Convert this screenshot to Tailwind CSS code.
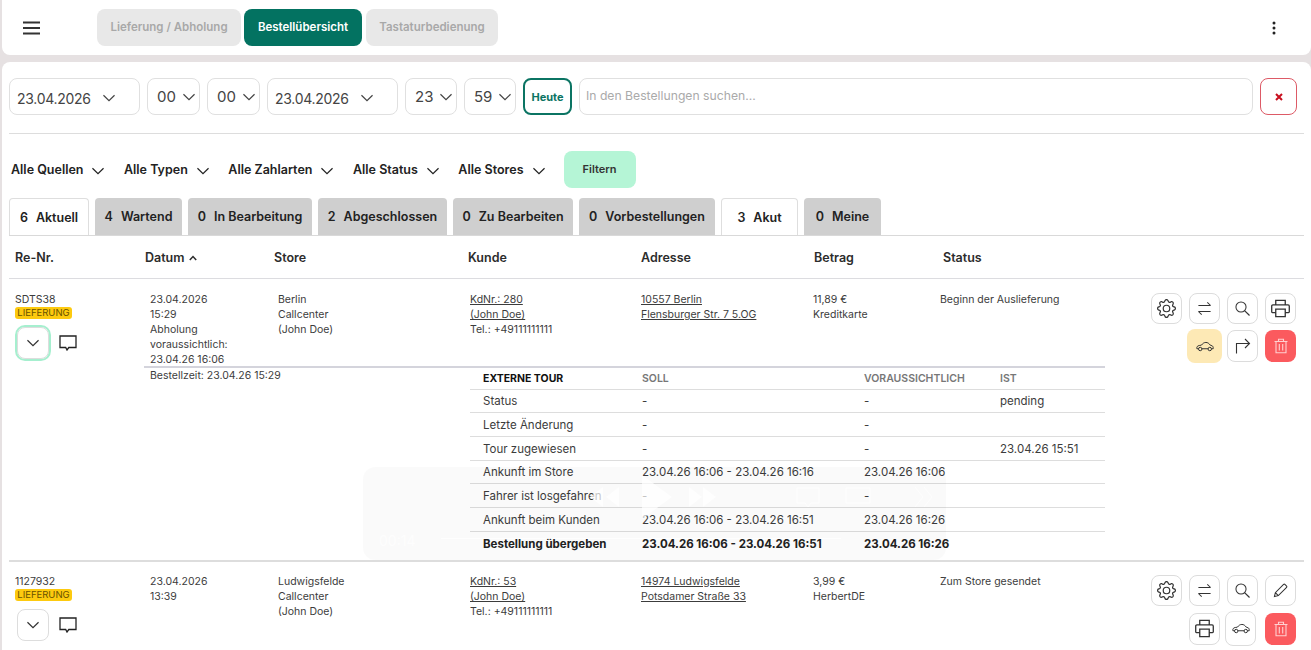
<!DOCTYPE html>
<html lang="de">
<head>
  <meta charset="UTF-8">
  <meta name="viewport" content="width=device-width, initial-scale=1.0">
  <title>Bestellübersicht</title>
  <script src="https://cdn.jsdelivr.net/npm/@tailwindcss/browser@4"></script>
</head>
<body class="relative h-[650px] overflow-hidden bg-[#e6e1e2] pl-[2px] font-[family-name:Inter,sans-serif] text-[#3c3c3c]">
  <!-- Icons -->
  <svg class="hidden">
    <symbol id="chev" viewBox="1.5 1.500 13 13"><path d="M2 5l6 6 6-6" fill="none" stroke="currentColor" stroke-width="1.300"/></symbol>
    <symbol id="gear" viewBox="0 0 16 16"><path fill="currentColor" d="M8 4.754a3.246 3.246 0 1 0 0 6.492 3.246 3.246 0 0 0 0-6.492zM5.754 8a2.246 2.246 0 1 1 4.492 0 2.246 2.246 0 0 1-4.492 0z"/><path fill="currentColor" d="M9.796 1.343c-.527-1.79-3.065-1.79-3.592 0l-.094.319a.873.873 0 0 1-1.255.52l-.292-.16c-1.64-.892-3.433.902-2.54 2.541l.159.292a.873.873 0 0 1-.52 1.255l-.319.094c-1.79.527-1.79 3.065 0 3.592l.319.094a.873.873 0 0 1 .52 1.255l-.16.292c-.892 1.64.901 3.434 2.541 2.54l.292-.159a.873.873 0 0 1 1.255.52l.094.319c.527 1.79 3.065 1.79 3.592 0l.094-.319a.873.873 0 0 1 1.255-.52l.292.16c1.64.893 3.434-.902 2.54-2.541l-.159-.292a.873.873 0 0 1 .52-1.255l.319-.094c1.79-.527 1.79-3.065 0-3.592l-.319-.094a.873.873 0 0 1-.52-1.255l.16-.292c.893-1.64-.902-3.433-2.541-2.54l-.292.159a.873.873 0 0 1-1.255-.52l-.094-.319zm-2.633.283c.246-.835 1.428-.835 1.674 0l.094.319a1.873 1.873 0 0 0 2.693 1.115l.291-.16c.764-.415 1.6.42 1.184 1.185l-.159.292a1.873 1.873 0 0 0 1.116 2.692l.318.094c.835.246.835 1.428 0 1.674l-.319.094a1.873 1.873 0 0 0-1.115 2.693l.16.291c.415.764-.42 1.6-1.185 1.184l-.291-.159a1.873 1.873 0 0 0-2.693 1.116l-.094.318c-.246.835-1.428.835-1.674 0l-.094-.319a1.873 1.873 0 0 0-2.692-1.115l-.292.16c-.764.415-1.6-.42-1.184-1.185l.159-.291A1.873 1.873 0 0 0 1.945 8.93l-.319-.094c-.835-.246-.835-1.428 0-1.674l.319-.094A1.873 1.873 0 0 0 3.06 4.377l-.16-.292c-.415-.764.42-1.6 1.185-1.184l.292.159a1.873 1.873 0 0 0 2.692-1.115l.094-.319z"/></symbol>
    <symbol id="swap" viewBox="0 0 16 16"><path d="M1.500 4.800h13M11 1.400l3.500 3.400M14.500 11.200h-13M5 14.600l-3.500-3.400" fill="none" stroke="currentColor" stroke-width="1.100"/></symbol>
    <symbol id="search" viewBox="0 0 16 16"><circle cx="6.400" cy="6.400" r="5.400" fill="none" stroke="currentColor" stroke-width="1.100"/><path d="M10.200 10.200l5.300 5.300" fill="none" stroke="currentColor" stroke-width="1.300"/></symbol>
    <symbol id="print" viewBox="0 0 16 16"><path d="M4 5V1.200h8V5M4 11.500H1.200A.7.7 0 0 1 .6 10.800V6a1 1 0 0 1 1-1h12.800a1 1 0 0 1 1 1v4.800a.7.7 0 0 1-.7.7H12M4 8.600h8v6.200H4z" fill="none" stroke="currentColor" stroke-width="1.100"/></symbol>
    <symbol id="car" viewBox="0 0 20 12"><path d="M1 8.500c-.5-2 .6-3.300 2.600-3.600l2.400-.4C7.500 2.500 9 1.500 11 1.500c2 0 3.500 1 4.800 3l2 .7c1 .4 1.500 1.300 1.300 3.300h-1.800M13.500 8.500h-7M2.800 8.500H1" fill="none" stroke="currentColor" stroke-width="1.100"/><circle cx="4.700" cy="8.800" r="1.900" fill="none" stroke="currentColor" stroke-width="1.100"/><circle cx="15.300" cy="8.800" r="1.900" fill="none" stroke="currentColor" stroke-width="1.100"/></symbol>
    <symbol id="turn" viewBox="0 0 16 16"><path d="M1.500 15.500V5.500h13M10 1l4.500 4.500L10 10" fill="none" stroke="currentColor" stroke-width="1.100"/></symbol>
    <symbol id="trash" viewBox="0 0 16 16"><path d="M1.500 3.500h13M5.500 3.500V1.200h5v2.300M3 3.500v11.300h10V3.500M6.300 6v6.500M9.700 6v6.500" fill="none" stroke="currentColor" stroke-width="1.100"/></symbol>
    <symbol id="pen" viewBox="0 0 16 16"><path d="M1.500 14.500l1-4.200L11.300 1.500a1 1 0 0 1 1.400 0l1.800 1.800a1 1 0 0 1 0 1.400L5.700 13.500zM2.500 10.300l3.200 3.200" fill="none" stroke="currentColor" stroke-width="1.100"/></symbol>
    <symbol id="chat" viewBox="0 0 18 16"><path d="M1 1h16v11.500H9.800L8 15l-1.300-2.500H1z" fill="none" stroke="currentColor" stroke-width="1.300"/></symbol>
  </svg>

  <!-- Kopfzeile -->
  <header class="flex h-[55px] items-center rounded-b-lg bg-white pl-[21px] pr-[35px]">
    <svg class="h-[14px] w-[17px] text-[#333]" viewBox="0 0 17 14"><path d="M0 1.500h17M0 7h17M0 12.500h17" stroke="currentColor" stroke-width="2"/></svg>
    <nav class="ml-[57px] flex gap-[3px] text-[11.500px] font-semibold">
      <a class="flex h-[37px] w-[144px] items-center justify-center rounded-lg bg-[#e8e8e8] pt-px text-[#a8a8a8]">Lieferung / Abholung</a>
      <a class="flex h-[37px] w-[118px] items-center justify-center rounded-lg bg-[#037261] pt-px text-white">Bestellübersicht</a>
      <a class="ml-px flex h-[37px] w-[132px] items-center justify-center rounded-lg bg-[#e8e8e8] pt-px text-[#a8a8a8]">Tastaturbedienung</a>
    </nav>
    <svg class="ml-auto h-[14px] w-[4px] text-[#222]" viewBox="0 0 4 14"><circle cx="2" cy="2" r="1.500" fill="currentColor"/><circle cx="2" cy="7" r="1.500" fill="currentColor"/><circle cx="2" cy="12" r="1.500" fill="currentColor"/></svg>
  </header>

  <main class="mt-[7px] h-[600px] rounded-t-lg bg-white pl-[7px] pr-[7px] pt-[16px]">
    <!-- Datum + Suche -->
    <div class="flex h-[37px] gap-[7px] text-[15px] text-[#444]">
      <button class="flex w-[131px] items-center rounded-lg border-[1.500px] border-[#e0e0e0] pl-[7px] pt-[3px] text-[14px] tracking-[-0.3px]">23.04.2026<svg class="ml-[12px] h-[12px] w-[12px]"><use href="#chev"/></svg></button>
      <button class="flex w-[53px] items-center rounded-lg border-[1.500px] border-[#e0e0e0] pl-[9px] pt-px">00<svg class="ml-[7px] h-[12px] w-[12px]"><use href="#chev"/></svg></button>
      <button class="flex w-[53px] items-center rounded-lg border-[1.500px] border-[#e0e0e0] pl-[9px] pt-px">00<svg class="ml-[7px] h-[12px] w-[12px]"><use href="#chev"/></svg></button>
      <button class="flex w-[131px] items-center rounded-lg border-[1.500px] border-[#e0e0e0] pl-[7px] pt-[3px] text-[14px] tracking-[-0.3px]">23.04.2026<svg class="ml-[12px] h-[12px] w-[12px]"><use href="#chev"/></svg></button>
      <button class="flex w-[52px] items-center rounded-lg border-[1.500px] border-[#e0e0e0] pl-[9px] pt-px">23<svg class="ml-[7px] h-[12px] w-[12px]"><use href="#chev"/></svg></button>
      <button class="flex w-[52px] items-center rounded-lg border-[1.500px] border-[#e0e0e0] pl-[9px] pt-px">59<svg class="ml-[7px] h-[12px] w-[12px]"><use href="#chev"/></svg></button>
      <button class="w-[49px] rounded-lg border-2 border-[#0b7463] pt-px text-[11px] font-bold text-[#0b7463]">Heute</button>
      <input class="w-[674px] rounded-lg border-[1.500px] border-[#e0e0e0] px-[6px] text-[12.200px] placeholder:text-[#aaaaaa]" placeholder="In den Bestellungen suchen...">
      <button class="flex w-[37px] items-center justify-center rounded-lg border-[1.500px] border-[#dd5a66] text-[#c80f1f]">
        <svg class="h-[8px] w-[8px]" viewBox="0 0 8 8"><path d="M1 1l6 6M7 1L1 7" stroke="currentColor" stroke-width="2"/></svg>
      </button>
    </div>
    <div class="mt-[18px] h-[1px] bg-[#dddddd]"></div>

    <!-- Filter -->
    <div class="mt-[17px] flex h-[37px] items-center pl-[2px] text-[12.500px] font-semibold text-[#222]">
      <span class="pt-[2px]">Alle Quellen</span><svg class="ml-[9px] mt-[3px] h-[12px] w-[12px]"><use href="#chev"/></svg>
      <span class="ml-[19.500px] pt-[2px]">Alle Typen</span><svg class="ml-[9px] mt-[3px] h-[12px] w-[12px]"><use href="#chev"/></svg>
      <span class="ml-[19.500px] pt-[2px]">Alle Zahlarten</span><svg class="ml-[9px] mt-[3px] h-[12px] w-[12px]"><use href="#chev"/></svg>
      <span class="ml-[19.500px] pt-[2px]">Alle Status</span><svg class="ml-[9px] mt-[3px] h-[12px] w-[12px]"><use href="#chev"/></svg>
      <span class="ml-[19.500px] pt-[2px]">Alle Stores</span><svg class="ml-[9px] mt-[3px] h-[12px] w-[12px]"><use href="#chev"/></svg>
      <button class="ml-[19px] h-[37px] w-[72px] rounded-lg bg-[#b5f5d6] text-[11px] font-semibold text-[#333]">Filtern</button>
    </div>

    <!-- Tabs -->
    <div class="mt-[10px] flex h-[38px] gap-[6px] border-b border-[#d9d9d9] text-[12.500px] font-semibold text-[#222]">
      <a class="flex w-[80px] items-center justify-center gap-[8px] rounded-t border border-b-0 border-[#dedede] bg-white pt-[2px]"><span>6</span><span>Aktuell</span></a>
      <a class="flex w-[87px] items-center justify-center gap-[8px] rounded-t bg-[#cfcfcf] pt-[2px]"><span>4</span><span>Wartend</span></a>
      <a class="flex w-[124px] items-center justify-center gap-[8px] rounded-t bg-[#cfcfcf] pt-[2px]"><span>0</span><span>In Bearbeitung</span></a>
      <a class="flex w-[129px] items-center justify-center gap-[8px] rounded-t bg-[#cfcfcf] pt-[2px]"><span>2</span><span>Abgeschlossen</span></a>
      <a class="flex w-[120px] items-center justify-center gap-[8px] rounded-t bg-[#cfcfcf] pt-[2px]"><span>0</span><span>Zu Bearbeiten</span></a>
      <a class="flex w-[136px] items-center justify-center gap-[8px] rounded-t bg-[#cfcfcf] pt-[2px]"><span>0</span><span>Vorbestellungen</span></a>
      <a class="flex w-[77px] items-center justify-center gap-[8px] rounded-t border border-b-0 border-[#dedede] bg-white pt-[2px]"><span>3</span><span>Akut</span></a>
      <a class="flex w-[77px] items-center justify-center gap-[8px] rounded-t bg-[#cfcfcf] pt-[2px]"><span>0</span><span>Meine</span></a>
    </div>

    <!-- Tabellenkopf -->
    <div class="grid h-[43px] grid-cols-[130px_129px_194px_173px_173px_129px_1fr] items-center border-b border-[#dcdce0] pl-[6px] pt-[2px] text-[12.500px] font-semibold text-[#2c2c2c]">
      <span>Re-Nr.</span>
      <span class="flex items-center gap-[4px]">Datum <svg class="h-[8px] w-[8px]" viewBox="0 0 8 8"><path d="M.8 6L4 2.500 7.200 6" fill="none" stroke="currentColor" stroke-width="1.500"/></svg></span>
      <span>Store</span><span>Kunde</span><span>Adresse</span><span>Betrag</span><span>Status</span>
    </div>

    <!-- Bestellung 1 -->
    <div class="grid h-[87px] grid-cols-[135px_128px_192px_171px_172px_127px_1fr] pl-[6px] pt-[13px] text-[10.500px] leading-[15px]">
      <div>
        <div>SDTS38</div>
        <div class="h-[12px] w-[57px] rounded-[3px] bg-[#fdca0f] text-center text-[9.500px] leading-[12px] text-[#6a5200]">LIEFERUNG</div>
        <div class="mt-[8px] flex items-center">
          <button class="ml-[2px] flex h-[32px] w-[32px] items-center justify-center rounded-lg border border-[#dddddd] bg-white text-[#333] outline-2 outline-[#a6efcf]"><svg class="h-[12px] w-[12px]"><use href="#chev"/></svg></button>
          <svg class="ml-[10px] h-[16px] w-[18px] text-[#222]"><use href="#chat"/></svg>
        </div>
      </div>
      <div>23.04.2026<br>15:29<br>Abholung<br>voraussichtlich:<br>23.04.26 16:06</div>
      <div>Berlin<br>Callcenter<br>(John Doe)</div>
      <div><a class="underline">KdNr.: 280</a><br><a class="underline">(John Doe)</a><br>Tel.: +49111111111</div>
      <div class="underline">10557 Berlin<br>Flensburger Str. 7 5.OG</div>
      <div>11,89 €<br>Kreditkarte</div>
      <div>Beginn der Auslieferung</div>
    </div>

    <!-- Tourdetails -->
    <div class="ml-[135px] w-[961px] border-t-2 border-[#d4d4dc]">
      <div class="flex">
        <div class="w-[326px] pl-[6px] text-[10.500px] leading-[15px]">Bestellzeit: 23.04.26 15:29</div>
        <table class="w-[635px] table-fixed border-collapse text-[11.500px] [&_td]:pt-[2px]">
          <colgroup><col class="w-[172px]"><col class="w-[222px]"><col class="w-[136px]"><col class="w-[105px]"></colgroup>
          <tbody>
            <tr class="h-[21px] border-b border-[#dddddd] text-[10.500px] font-semibold text-[#777777]"><td class="pl-[13px] font-bold text-[#111]">EXTERNE TOUR</td><td>SOLL</td><td>VORAUSSICHTLICH</td><td>IST</td></tr>
            <tr class="h-[23.700px] border-b border-[#dddddd]"><td class="pl-[13px]">Status</td><td>-</td><td>-</td><td>pending</td></tr>
            <tr class="h-[23.700px] border-b border-[#dddddd]"><td class="pl-[13px]">Letzte Änderung</td><td>-</td><td>-</td><td></td></tr>
            <tr class="h-[23.700px] border-b border-[#dddddd]"><td class="pl-[13px]">Tour zugewiesen</td><td>-</td><td>-</td><td>23.04.26 15:51</td></tr>
            <tr class="h-[23.700px] border-b border-[#dddddd]"><td class="pl-[13px]">Ankunft im Store</td><td>23.04.26 16:06 - 23.04.26 16:16</td><td>23.04.26 16:06</td><td></td></tr>
            <tr class="h-[23.700px] border-b border-[#dddddd]"><td class="pl-[13px]">Fahrer ist losgefahren</td><td>-</td><td>-</td><td></td></tr>
            <tr class="h-[23.700px] border-b border-[#dddddd]"><td class="pl-[13px]">Ankunft beim Kunden</td><td>23.04.26 16:06 - 23.04.26 16:51</td><td>23.04.26 16:26</td><td></td></tr>
            <tr class="h-[24px] font-bold text-[#222]"><td class="pl-[13px]">Bestellung übergeben</td><td>23.04.26 16:06 - 23.04.26 16:51</td><td>23.04.26 16:26</td><td></td></tr>
          </tbody>
        </table>
      </div>
    </div>
    <div class="mt-[5px] h-[2px] bg-[#dddddd]"></div>

    <!-- Bestellung 2 -->
    <div class="grid grid-cols-[135px_128px_192px_171px_172px_127px_1fr] pl-[6px] pt-[12px] text-[10.500px] leading-[15px]">
      <div>
        <div>1127932</div>
        <div class="h-[12px] w-[57px] rounded-[3px] bg-[#fdca0f] text-center text-[9.500px] leading-[12px] text-[#6a5200]">LIEFERUNG</div>
        <div class="mt-[8px] flex items-center">
          <button class="ml-[2px] flex h-[32px] w-[32px] items-center justify-center rounded-lg border border-[#dddddd] bg-white text-[#333]"><svg class="h-[12px] w-[12px]"><use href="#chev"/></svg></button>
          <svg class="ml-[10px] h-[16px] w-[18px] text-[#222]"><use href="#chat"/></svg>
        </div>
      </div>
      <div>23.04.2026<br>13:39</div>
      <div>Ludwigsfelde<br>Callcenter<br>(John Doe)</div>
      <div><a class="underline">KdNr.: 53</a><br><a class="underline">(John Doe)</a><br>Tel.: +49111111111</div>
      <div class="underline">14974 Ludwigsfelde<br>Potsdamer Straße 33</div>
      <div>3,99 €<br>HerbertDE</div>
      <div>Zum Store gesendet</div>
    </div>
  </main>

  <!-- Aktionen Bestellung 1 -->
  <div class="absolute left-[1151px] top-[293px] flex w-[145px] flex-col items-end gap-[5px] text-[#333]">
    <div class="flex gap-[7px]">
      <button class="flex h-[31px] w-[31px] items-center justify-center rounded-lg border-[1.500px] border-[#dcdcdc] bg-white"><svg class="h-[19px] w-[19px]"><use href="#gear"/></svg></button>
      <button class="flex h-[31px] w-[31px] items-center justify-center rounded-lg border-[1.500px] border-[#dcdcdc] bg-white"><svg class="h-[15px] w-[15px]"><use href="#swap"/></svg></button>
      <button class="flex h-[31px] w-[31px] items-center justify-center rounded-lg border-[1.500px] border-[#dcdcdc] bg-white"><svg class="h-[15px] w-[15px]"><use href="#search"/></svg></button>
      <button class="flex h-[31px] w-[31px] items-center justify-center rounded-lg border-[1.500px] border-[#dcdcdc] bg-white"><svg class="h-[19px] w-[19px]"><use href="#print"/></svg></button>
    </div>
    <div class="flex items-center gap-[7px]">
      <button class="-mr-[2px] flex h-[34px] w-[35px] items-center justify-center rounded-lg bg-[#fde9b5]"><svg class="h-[11px] w-[18px]"><use href="#car"/></svg></button>
      <button class="flex h-[32px] w-[31px] items-center justify-center rounded-lg border-[1.500px] border-[#dcdcdc] bg-white"><svg class="h-[16px] w-[16px]"><use href="#turn"/></svg></button>
      <button class="flex h-[32px] w-[31px] items-center justify-center rounded-lg bg-[#fb5a5e] text-[#ffd0d0]"><svg class="h-[18px] w-[16px]"><use href="#trash"/></svg></button>
    </div>
  </div>

  <!-- Aktionen Bestellung 2 -->
  <div class="absolute left-[1151px] top-[575px] flex w-[145px] flex-col items-end gap-[5px] text-[#333]">
    <div class="flex gap-[7px]">
      <button class="flex h-[31px] w-[31px] items-center justify-center rounded-lg border-[1.500px] border-[#dcdcdc] bg-white"><svg class="h-[19px] w-[19px]"><use href="#gear"/></svg></button>
      <button class="flex h-[31px] w-[31px] items-center justify-center rounded-lg border-[1.500px] border-[#dcdcdc] bg-white"><svg class="h-[15px] w-[15px]"><use href="#swap"/></svg></button>
      <button class="flex h-[31px] w-[31px] items-center justify-center rounded-lg border-[1.500px] border-[#dcdcdc] bg-white"><svg class="h-[15px] w-[15px]"><use href="#search"/></svg></button>
      <button class="flex h-[31px] w-[31px] items-center justify-center rounded-lg border-[1.500px] border-[#dcdcdc] bg-white"><svg class="h-[15px] w-[15px]"><use href="#pen"/></svg></button>
    </div>
    <div class="flex items-center gap-[7px]">
      <button class="flex h-[32px] w-[31px] items-center justify-center rounded-lg border-[1.500px] border-[#dcdcdc] bg-white"><svg class="h-[19px] w-[19px]"><use href="#print"/></svg></button>
      <button class="-ml-[2px] flex h-[35px] w-[31px] items-center justify-center rounded-lg border-[1.500px] border-[#dcdcdc] bg-white"><svg class="h-[11px] w-[18px]"><use href="#car"/></svg></button>
      <button class="ml-[2px] flex h-[32px] w-[31px] items-center justify-center rounded-lg bg-[#fb5a5e] text-[#ffd0d0]"><svg class="h-[18px] w-[16px]"><use href="#trash"/></svg></button>
    </div>
  </div>

  <!-- Schwaches Player-Overlay -->
  <div class="pointer-events-none absolute left-[363px] top-[467px] h-[93px] w-[583px] rounded-xl bg-black/[0.02] text-white/70">
    <svg class="absolute inset-0 h-[93px] w-[583px]" viewBox="0 0 583 93">
      <path d="M240 20v20l-13-10zM256 20v20l-13-10zM279 8v44l30-22zM326 20v20l13-10zM340 20v20l13-10z" fill="currentColor"/>
      <path d="M434 21h22v15h-8l-3 4-3-4h-8zM483 21h24v15h-24zM552 20l8 10-8 10M561 20l8 10-8 10" fill="none" stroke="currentColor"/>
    </svg>
    <span class="absolute left-[16px] top-[63px] text-[14px]">00:14</span>
    <div class="absolute left-[78px] top-[71px] h-[1px] w-[400px] bg-white/70"></div>
  </div>
</body>
</html>
